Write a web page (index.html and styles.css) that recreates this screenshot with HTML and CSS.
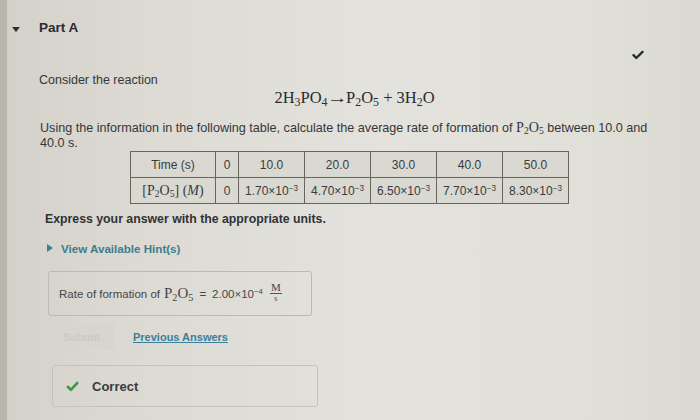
FILE: index.html
```html
<!DOCTYPE html>
<html>
<head>
<meta charset="utf-8">
<link rel="stylesheet" href="styles.css">
</head>
<body>
<div class="frame">
  <div class="edge"></div>
  <main class="page">
    <header class="part-head">
      <span class="caret"></span>
      <h2 class="part-title">Part A</h2>
    </header>
    <div class="status">
      <svg class="done" width="12" height="10" viewBox="0 0 12 10"><path d="M1.5 5.2 L4.3 8 L10.5 1.8" fill="none" stroke="#2a2d33" stroke-width="2.4" stroke-linecap="round" stroke-linejoin="round"/></svg>
    </div>
    <p class="lead">Consider the reaction</p>
    <p class="equation">2H<sub>3</sub>PO<sub>4</sub><span class="arrow">→</span>P<sub>2</sub>O<sub>5</sub> + 3H<sub>2</sub>O</p>
    <p class="question">Using the information in the following table, calculate the average rate of formation of <span class="chem">P<sub>2</sub>O<sub>5</sub></span> between 10.0 and 40.0 s.</p>
    <table class="data">
      <tr>
        <td class="c-label">Time (s)</td><td class="c-zero">0</td><td>10.0</td><td>20.0</td><td>30.0</td><td>40.0</td><td>50.0</td>
      </tr>
      <tr>
        <td class="c-label"><span class="chem">[P<sub>2</sub>O<sub>5</sub>] (<i>M</i>)</span></td><td class="c-zero">0</td><td>1.70×10<sup>−3</sup></td><td>4.70×10<sup>−3</sup></td><td>6.50×10<sup>−3</sup></td><td>7.70×10<sup>−3</sup></td><td>8.30×10<sup>−3</sup></td>
      </tr>
    </table>
    <p class="instruct">Express your answer with the appropriate units.</p>
    <div class="hint"><span class="hint-caret"></span><span class="hint-text">View Available Hint(s)</span></div>
    <div class="answer">
      <span>Rate of formation of</span>
      <span class="chem big">P<sub>2</sub>O<sub>5</sub></span>
      <span class="eq">=</span>
      <span>2.00×10<sup>−4</sup></span>
      <span class="frac"><span class="num">M</span><span class="den">s</span></span>
    </div>
    <div class="actions">
      <span class="submit">Submit</span>
      <a class="prev">Previous Answers</a>
    </div>
    <div class="result">
      <svg class="ok" width="13" height="11" viewBox="0 0 13 11"><path d="M1.8 5.8 L4.9 8.8 L11.2 2" fill="none" stroke="#3c9a45" stroke-width="2.6" stroke-linecap="round" stroke-linejoin="round"/></svg>
      <span class="result-text">Correct</span>
    </div>
  </main>
</div>
</body>
</html>
```
FILE: styles.css
```css
html, body {
  margin: 0;
  padding: 0;
}
body {
  width: 700px;
  height: 420px;
  overflow: hidden;
  font-family: "Liberation Sans", Arial, sans-serif;
  color: #35363a;
  background: linear-gradient(90deg, #d3d1c9 0%, #dcdad3 20%, #e3e2dc 55%, #e0dfd8 85%, #dad9d2 100%);
}
.frame {
  display: flex;
  height: 420px;
}
.edge {
  width: 7px;
  flex: none;
  background: #bab6ae;
}
.page {
  flex: 1;
}
.part-head {
  display: flex;
  align-items: center;
  height: 16px;
  padding-top: 20px;
  padding-left: 5px;
}
.caret {
  width: 0;
  height: 0;
  border-left: 4px solid transparent;
  border-right: 4px solid transparent;
  border-top: 5px solid #2b2d33;
  margin-top: 2px;
}
.part-title {
  margin: 0 0 0 19px;
  font-size: 13.5px;
  font-weight: bold;
  color: #2a2b30;
  line-height: 16px;
}
.status {
  height: 12px;
  margin-top: 14px;
  display: flex;
  justify-content: flex-end;
  padding-right: 56px;
}
.lead {
  margin: 10px 0 0 32px;
  font-size: 12.5px;
  line-height: 16px;
}
.equation {
  margin: 2px 0 0;
  text-align: center;
  font-family: "Liberation Serif", "Times New Roman", serif;
  font-size: 16.5px;
  line-height: 16px;
  color: #2a2b2f;
  padding-left: 2px;
}
.equation sub {
  font-size: 0.72em;
}
.arrow {
  display: inline-block;
  margin: 0 1px;
  transform: scaleX(1.25);
}
sub {
  font-size: 0.68em;
  vertical-align: -0.25em;
  line-height: 0;
}
sup {
  font-size: 0.68em;
  vertical-align: 0.5em;
  line-height: 0;
}
.question {
  margin: 14px 0 0 33px;
  width: 625px;
  font-size: 12.6px;
  line-height: 15px;
}
.chem {
  font-family: "Liberation Serif", "Times New Roman", serif;
  font-size: 1.12em;
  line-height: 1;
}
.data {
  margin: 0 0 0 123px;
  border-collapse: collapse;
  font-size: 12px;
  color: #3a3b3e;
}
.data td {
  border: 1px solid #66665f;
  background: #d9d8d1;
  height: 25px;
  padding: 0;
  text-align: center;
  width: 65px;
}
.data td.c-label {
  width: 84px;
}
.data td.c-zero {
  width: 22px;
}
.data td .chem {
  font-size: 14px;
}
.instruct {
  margin: 7px 0 0 38px;
  font-size: 12.3px;
  font-weight: bold;
  line-height: 16px;
  color: #313236;
}
.hint {
  display: flex;
  align-items: center;
  margin: 13px 0 0 40px;
  height: 16px;
}
.hint-caret {
  width: 0;
  height: 0;
  border-top: 4px solid transparent;
  border-bottom: 4px solid transparent;
  border-left: 6px solid #3a8090;
}
.hint-text {
  margin-left: 8px;
  font-size: 11.6px;
  font-weight: bold;
  color: #3a7f8f;
}
.answer {
  margin: 15px 0 0 41px;
  width: 252px;
  height: 43px;
  border: 1px solid #bab9b2;
  border-radius: 3px;
  display: flex;
  align-items: center;
  gap: 4px;
  padding-left: 10px;
  font-size: 11.5px;
  color: #45464a;
}
.answer .big {
  font-size: 15px;
}
.answer .eq {
  margin: 0 2px;
}
.frac {
  display: inline-flex;
  flex-direction: column;
  align-items: center;
  font-family: "Liberation Serif", "Times New Roman", serif;
  margin-left: 3px;
  margin-top: -2px;
}
.frac .num {
  font-size: 11px;
  line-height: 12px;
  border-bottom: 1px solid #55565a;
  padding: 0 1px;
}
.frac .den {
  font-size: 8px;
  line-height: 10px;
}
.actions {
  display: flex;
  align-items: center;
  margin: 8px 0 0 42px;
  height: 26px;
}
.submit {
  width: 65px;
  height: 26px;
  border-radius: 3px;
  background: #d6d5ce;
  color: #cbcac3;
  font-size: 11px;
  font-weight: bold;
  display: flex;
  align-items: center;
  justify-content: center;
}
.prev {
  margin-left: 19px;
  font-size: 11px;
  font-weight: bold;
  color: #3b7f9a;
  text-decoration: underline;
}
.result {
  margin: 15px 0 0 45px;
  width: 251px;
  height: 40px;
  border: 1px solid #c3c2bb;
  border-radius: 3px;
  display: flex;
  align-items: center;
  padding-left: 13px;
}
.result-text {
  margin-left: 13px;
  font-size: 13px;
  font-weight: bold;
  color: #3a3a3d;
}
```
